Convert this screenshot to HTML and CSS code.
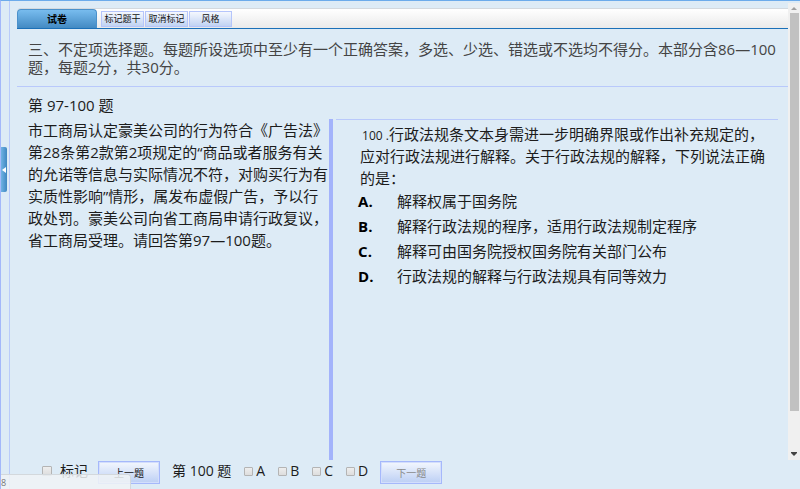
FILE: index.html
```html
<!DOCTYPE html>
<html lang="zh-CN">
<head>
<meta charset="utf-8">
<meta name="viewport" content="width=device-width, initial-scale=1">
<title>试卷</title>
<link rel="stylesheet" href="styles.css">
</head>
<body>
<div class="app">
  <aside class="rail">
    <button class="rail-toggle" type="button" aria-label="收起">
      <svg width="4" height="6" viewBox="0 0 4 6"><path d="M4 0v6L0 3z" fill="#fff"/></svg>
    </button>
  </aside>
  <div class="content">
    <div class="upper">
      <main class="paper">
        <nav class="tabs">
          <button class="tab" type="button">试卷</button>
          <button class="tool" type="button">标记题干</button>
          <button class="tool" type="button">取消标记</button>
          <button class="tool" type="button">风格</button>
        </nav>
        <p class="intro">三、不定项选择题。每题所设选项中至少有一个正确答案，多选、少选、错选或不选均不得分。本部分含86—100<br>题，每题2分，共30分。</p>
        <h1 class="range">第 97-100 题</h1>
        <div class="columns">
          <section class="passage">
            <p>市工商局认定豪美公司的行为符合《广告法》<br>第28条第2款第2项规定的“商品或者服务有关<br>的允诺等信息与实际情况不符，对购买行为有<br>实质性影响”情形，属发布虚假广告，予以行<br>政处罚。豪美公司向省工商局申请行政复议，<br>省工商局受理。请回答第97—100题。</p>
          </section>
          <section class="question">
            <p class="stem"><span class="num">100 .</span>行政法规条文本身需进一步明确界限或作出补充规定的，<br>应对行政法规进行解释。关于行政法规的解释，下列说法正确<br>的是：</p>
            <dl class="options">
              <dt>A.</dt><dd>解释权属于国务院</dd>
              <dt>B.</dt><dd>解释行政法规的程序，适用行政法规制定程序</dd>
              <dt>C.</dt><dd>解释可由国务院授权国务院有关部门公布</dd>
              <dt>D.</dt><dd>行政法规的解释与行政法规具有同等效力</dd>
            </dl>
          </section>
        </div>
      </main>
      <div class="scroll" aria-hidden="true">
        <svg width="12" height="10" viewBox="0 0 12 10"><path d="M3 7h6L6 4z" fill="#a0a0a0"/></svg>
        <div class="thumb"></div>
        <svg width="12" height="12" viewBox="0 0 12 12"><path d="M3 4h6v1L6 8 3 5z" fill="#444"/></svg>
      </div>
    </div>
    <form class="answer">
      <label class="mark"><input type="checkbox">标记</label>
      <button class="step" type="button">上一题</button>
      <span class="current">第 100 题</span>
      <div class="choices">
        <label><input type="checkbox">A</label>
        <label><input type="checkbox">B</label>
        <label><input type="checkbox">C</label>
        <label><input type="checkbox">D</label>
      </div>
      <button class="step" type="button" disabled>下一题</button>
    </form>
  </div>
  <div class="status">8</div>
</div>
</body>
</html>
```

FILE: styles.css
```css
* { box-sizing: border-box; }

body {
  margin: 0;
  background: #ddebf6;
  color: #1c1c1c;
  font: 15px/22px "Open Sans", "Noto Sans CJK SC", sans-serif;
}

button, input { font: inherit; margin: 0; }
p, h1, dl, dd { margin: 0; }
svg { display: block; }

.app {
  position: relative;
  display: flex;
  min-height: 100vh;
  border-top: 1px solid #6cabeb;
  border-left: 1px solid #a3b8fa;
  overflow: hidden;
}

.rail {
  display: flex;
  flex: none;
  width: 9px;
  border-right: 1px solid #b9cbfa;
  padding-top: 146px;
}

.rail-toggle {
  display: flex;
  align-items: center;
  justify-content: center;
  width: 6px;
  height: 45px;
  padding: 0;
  border: 0;
  border-radius: 0 2px 2px 0;
  background: linear-gradient(90deg, #70b3e4, #3f87c1);
}

.content {
  flex: 1;
  min-width: 0;
  display: flex;
  flex-direction: column;
}

.upper { flex: 1; display: flex; }

.paper {
  flex: 1;
  min-width: 0;
  display: flex;
  flex-direction: column;
  padding: 7px 0 0 7px;
}

.tabs {
  display: flex;
  align-items: center;
  gap: 1px;
  height: 21px;
  border-top: 1px solid #d3d9df;
  border-bottom: 1px solid #1b70b8;
  border-radius: 4px 0 0 0;
  background: linear-gradient(#fff, #eaeaea);
}

.tab {
  width: 80px;
  height: 19px;
  margin-right: 3px;
  padding: 0;
  border: 1px solid #4b91cb;
  border-bottom: 0;
  border-radius: 4px 4px 0 0;
  background: linear-gradient(#78bcee, #438ac3);
  color: #000;
  font-size: 10px;
  font-weight: bold;
  line-height: 18px;
}

.tool {
  width: 43px;
  height: 16px;
  padding: 0;
  border: 1px solid #b5c5fb;
  background: linear-gradient(#f5f8fe, #c1d3f3);
  color: #111;
  font-size: 9px;
  line-height: 14px;
  white-space: nowrap;
}

.intro {
  padding: 11px 0 10px 11px;
  border-bottom: 1px solid #b9c9fb;
  color: #444;
  line-height: 18px;
  white-space: nowrap;
}

.range {
  padding: 7px 0 3px 11px;
  font-size: 15px;
  font-weight: normal;
  line-height: 22px;
}

.columns { flex: 1; display: flex; gap: 3px; }

.passage {
  flex: none;
  width: 41%;
  padding-left: 11px;
  border-right: 4px solid #a3b3fb;
  white-space: nowrap;
}

.question {
  flex: 1;
  min-width: 0;
  margin-right: 10px;
  padding: 3px 0 0 22px;
  border-top: 1px solid #b9c9fb;
}

.stem { padding-left: 2px; white-space: nowrap; }
.num { font-size: 12px; line-height: 1; padding-left: 2px; }

.options {
  display: grid;
  grid-template-columns: 39px 1fr;
  line-height: 25px;
}

.options dt { font-weight: bold; color: #000; }

.scroll {
  flex: none;
  display: flex;
  flex-direction: column;
  width: 12px;
  margin-top: 2px;
  background: #f0f0f0;
}

.thumb {
  flex: none;
  height: 87%;
  margin: 0 1px 0 2px;
  background: #c1c1c1;
}

.scroll svg:last-child { margin-top: auto; }

.answer {
  display: flex;
  align-items: center;
  height: 29px;
  padding: 0 0 4px 32px;
  font-size: 14px;
}

.answer label {
  display: flex;
  align-items: center;
  gap: 3px;
}

.answer label, .current { padding-bottom: 3px; }

.answer input {
  appearance: none;
  width: 9px;
  height: 9px;
  border: 1px solid #b4b4b4;
  border-radius: 1px;
  background: linear-gradient(#eee, #ddd);
}

.answer .mark { gap: 8px; margin-right: 10px; }
.answer .mark input { width: 10px; height: 10px; }

.step {
  width: 62px;
  height: 23px;
  padding: 0;
  border: 1px solid #a5b8fb;
  box-shadow: inset 0 0 0 1px #d3defc;
  background: linear-gradient(#f3f7fe, #bccff4);
  color: #111;
  font-size: 10px;
  line-height: 18px;
}

.step:disabled { color: #888; }

.current { margin: 0 13px 0 12px; white-space: nowrap; }
.choices { display: flex; gap: 13px; margin-right: 12px; }

.status {
  position: absolute;
  left: 0;
  bottom: 0;
  width: 130px;
  height: 15px;
  border-top: 1px solid #d3d8dc;
  border-right: 1px solid #d3d8dc;
  border-radius: 0 3px 0 0;
  background: rgba(240, 243, 246, 0.85);
  color: #777;
  font-size: 9px;
  line-height: 15px;
}
```
